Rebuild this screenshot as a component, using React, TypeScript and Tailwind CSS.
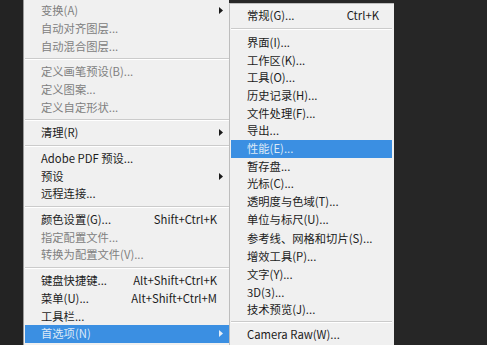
import React from 'react';

type Item = {
  label?: string;
  shortcut?: string;
  disabled?: boolean;
  arrow?: boolean;
  active?: boolean;
  sep?: boolean;
  extra?: string;
};

const leftItems: Item[] = [
  { label: '变换(A)', disabled: true, arrow: true },
  { label: '自动对齐图层...', disabled: true },
  { label: '自动混合图层...', disabled: true },
  { sep: true },
  { label: '定义画笔预设(B)...', disabled: true },
  { label: '定义图案...', disabled: true },
  { label: '定义自定形状...', disabled: true },
  { sep: true },
  { label: '清理(R)', arrow: true },
  { sep: true },
  { label: 'Adobe PDF 预设...' },
  { label: '预设', arrow: true },
  { label: '远程连接...' },
  { sep: true },
  { label: '颜色设置(G)...', shortcut: 'Shift+Ctrl+K' },
  { label: '指定配置文件...', disabled: true },
  { label: '转换为配置文件(V)...', disabled: true },
  { sep: true },
  { label: '键盘快捷键...', shortcut: 'Alt+Shift+Ctrl+K' },
  { label: '菜单(U)...', shortcut: 'Alt+Shift+Ctrl+M' },
  { label: '工具栏...' },
  { label: '首选项(N)', arrow: true, active: true },
];

const subItems: Item[] = [
  { label: '常规(G)...', shortcut: 'Ctrl+K' },
  { sep: true, extra: 'h-[9px]' },
  { label: '界面(I)...' },
  { label: '工作区(K)...' },
  { label: '工具(O)...' },
  { label: '历史记录(H)...' },
  { label: '文件处理(F)...' },
  { label: '导出...' },
  { label: '性能(E)...', active: true },
  { label: '暂存盘...' },
  { label: '光标(C)...' },
  { label: '透明度与色域(T)...' },
  { label: '单位与标尺(U)...' },
  { label: '参考线、网格和切片(S)...', extra: 'mt-[2px]' },
  { label: '增效工具(P)...' },
  { label: '文字(Y)...' },
  { label: '3D(3)...' },
  { label: '技术预览(J)...' },
  { sep: true, extra: 'h-[7px]' },
  { label: 'Camera Raw(W)...' },
];

function Arrow({ light }: { light?: boolean }) {
  return (
    <svg width="4" height="7" viewBox="0 0 4 7" className="shrink-0">
      <path d="M0 0 L4 3.5 L0 7 Z" fill={light ? '#e4eef8' : '#1a1a1a'} />
    </svg>
  );
}

function Row({ item, padL, padR, keyGap }: { item: Item; padL: string; padR: string; keyGap: string }) {
  if (item.sep) {
    return (
      <div className={`flex items-center ${item.extra ?? 'h-[8px]'}`}>
        <div className="w-full border-t border-[#cbcbcb] border-b border-b-white" />
      </div>
    );
  }
  const color = item.active
    ? 'bg-[#3b8fe2] text-[#dbe9f7]'
    : item.disabled
      ? 'text-[#808080]'
      : 'text-[#1c1c1c]';
  return (
    <div className={`flex items-center h-[17.7px] ${padL} ${padR} ${color} ${item.extra ?? ''}`}>
      <span className="flex-1 whitespace-nowrap">{item.label}</span>
      {item.shortcut && <span className={`whitespace-nowrap ${keyGap}`}>{item.shortcut}</span>}
      {item.arrow && <Arrow light={item.active} />}
    </div>
  );
}

export default function App() {
  return (
    <div
      className="w-[487px] h-[345px] overflow-hidden bg-[#262626] flex items-start text-[11.3px] leading-none"
      style={{ fontFamily: '"Noto Sans CJK SC", "Noto Sans", sans-serif' }}
    >
      <div className="w-[23px] h-full bg-[#232323] shrink-0" />

      {/* main edit menu */}
      <div className="w-[206px] h-full shrink-0 bg-[#f0f0f0] border-l border-[#9a9a9a] pt-[2px] pl-[1px]">
        {leftItems.map((it, i) => (
          <Row key={i} item={it} padL="pl-[16px]" padR="pr-[6px]" keyGap="mr-[6px]" />
        ))}
      </div>

      {/* preferences submenu */}
      <div className="w-[165px] h-[360px] shrink-0 mt-[3px] bg-[#f0f0f0] border-l border-t border-[#bdbdbd] pt-[3px] pl-[1px] pr-[2px]">
        {subItems.map((it, i) => (
          <Row key={i} item={it} padL="pl-[16px]" padR="pr-[13px]" keyGap="" />
        ))}
      </div>
    </div>
  );
}
